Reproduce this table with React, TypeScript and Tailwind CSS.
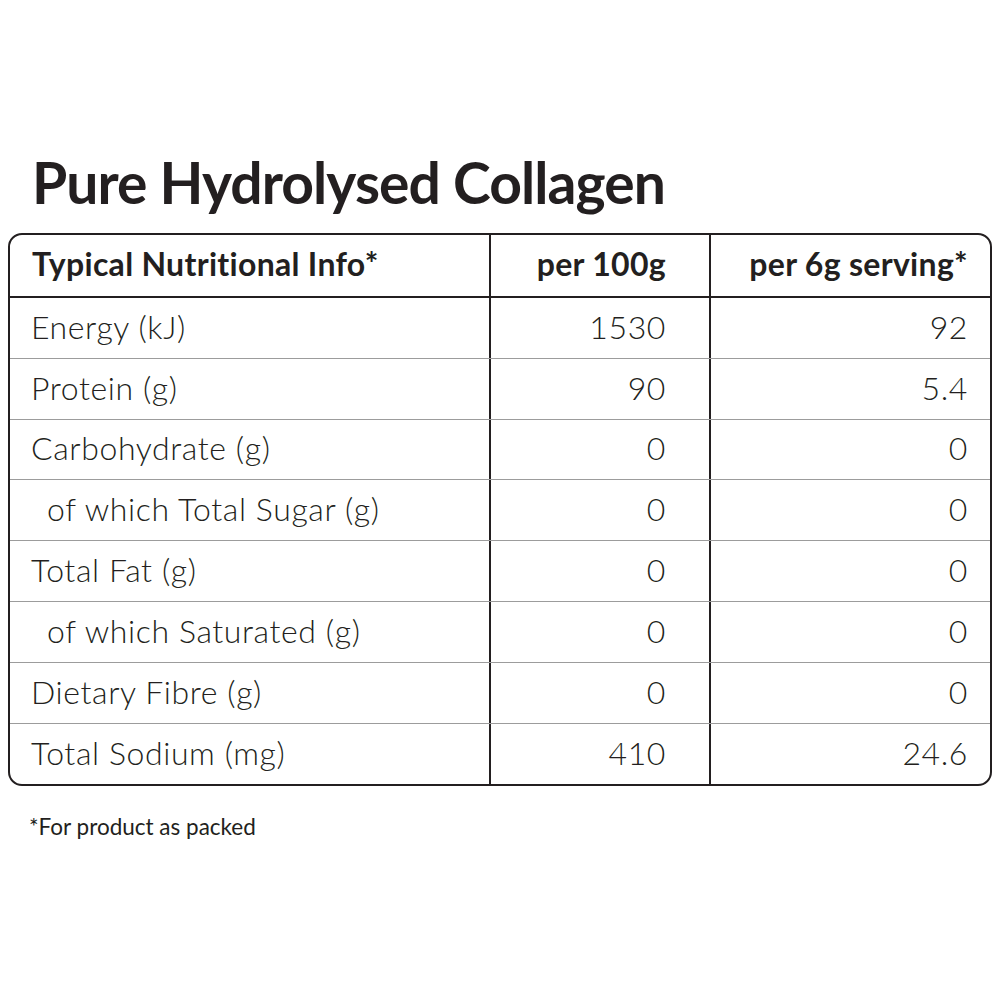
const rows: { label: string; per100: string; perServing: string; indent?: boolean }[] = [
  { label: "Energy (kJ)", per100: "1530", perServing: "92" },
  { label: "Protein (g)", per100: "90", perServing: "5.4" },
  { label: "Carbohydrate (g)", per100: "0", perServing: "0" },
  { label: "of which Total Sugar (g)", per100: "0", perServing: "0", indent: true },
  { label: "Total Fat (g)", per100: "0", perServing: "0" },
  { label: "of which Saturated (g)", per100: "0", perServing: "0", indent: true },
  { label: "Dietary Fibre (g)", per100: "0", perServing: "0" },
  { label: "Total Sodium (mg)", per100: "410", perServing: "24.6" },
];

export default function App() {
  return (
    <div className="w-[1000px] h-[1000px] bg-white text-[#231f20] font-['Lato',sans-serif] px-[8px] pt-[146px]">
      <h1 className="pl-[24px] text-[57px] leading-[72px] font-bold tracking-[-0.9px]">
        Pure Hydrolysed Collagen
      </h1>

      <div className="mt-[15px] border-2 border-[#231f20] rounded-[14px] overflow-hidden">
        {/* header */}
        <div className="grid grid-cols-[481px_220px_1fr] h-[63px] border-b-2 border-[#231f20] font-bold text-[32px] tracking-[0.3px]">
          <div className="flex items-center pl-[22px] pb-[3px] border-r-2 border-[#231f20]">
            Typical Nutritional Info*
          </div>
          <div className="flex items-center justify-end pr-[43px] pb-[3px] border-r-2 border-[#231f20]">
            per 100g
          </div>
          <div className="flex items-center justify-end pr-[22px] pb-[3px]">
            per 6g serving*
          </div>
        </div>

        {/* rows */}
        {rows.map((row, i) => (
          <div
            key={row.label}
            className={`grid grid-cols-[481px_220px_1fr] h-[60.8px] text-[32px] font-light tracking-[0.6px] ${
              i < rows.length - 1 ? "border-b border-[#9c9c9c]" : ""
            }`}
          >
            <div
              className={`flex items-center pb-[2px] border-r-2 border-[#231f20] ${
                row.indent ? "pl-[37px]" : "pl-[21px]"
              }`}
            >
              {row.label}
            </div>
            <div className="flex items-center justify-end pr-[43px] pb-[2px] border-r-2 border-[#231f20]">
              {row.per100}
            </div>
            <div className="flex items-center justify-end pr-[22px] pb-[2px]">
              {row.perServing}
            </div>
          </div>
        ))}
      </div>

      <p className="mt-[24px] pl-[21px] text-[22.5px]">*For product as packed</p>
    </div>
  );
}
